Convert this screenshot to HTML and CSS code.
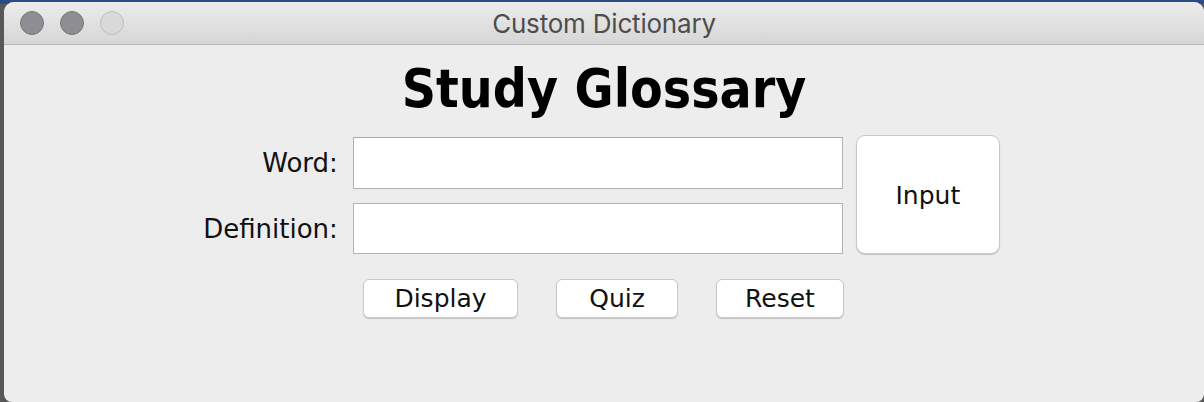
FILE: index.html
```html
<!DOCTYPE html>
<html>
<head>
<meta charset="utf-8">
<link rel="stylesheet" href="styles.css">
</head>
<body>
<div class="window">
  <div class="titlebar">
    <div class="lights">
      <span class="light"></span>
      <span class="light"></span>
      <span class="light off"></span>
    </div>
    <div class="title">Custom Dictionary</div>
    <div></div>
  </div>
  <div class="content">
    <h1 class="heading">Study Glossary</h1>
    <div class="form">
      <label class="label row1">Word:</label>
      <div class="field row1"></div>
      <label class="label row2">Definition:</label>
      <div class="field row2"></div>
      <button class="btn input-btn">Input</button>
    </div>
    <div class="actions">
      <button class="btn small w-display">Display</button>
      <button class="btn small w-quiz">Quiz</button>
      <button class="btn small w-reset">Reset</button>
    </div>
  </div>
</div>
</body>
</html>
```

FILE: styles.css
```css
html, body {
  margin: 0;
  padding: 0;
}
body {
  width: 1204px;
  height: 402px;
  overflow: hidden;
  background: linear-gradient(#2c4a86 0, #2c4a86 4px, #585858 4px, #585858 100%);
  font-family: "DejaVu Sans", sans-serif;
}
.window {
  margin: 2px 0 0 4px;
  width: 1200px;
  height: 400px;
  border-radius: 10px 10px 8px 8px;
  overflow: hidden;
  background: #ededed;
  display: flex;
  flex-direction: column;
}
.titlebar {
  height: 42px;
  flex: none;
  border-bottom: 1px solid #b9b9b9;
  background: linear-gradient(#ececec, #d6d6d6);
  display: grid;
  grid-template-columns: 1fr auto 1fr;
  align-items: center;
}
.lights {
  display: flex;
  gap: 16px;
  padding-left: 16px;
}
.light {
  width: 22px;
  height: 22px;
  border-radius: 50%;
  background: #8e8d91;
  border: 1px solid #79787c;
}
.light.off {
  background: #d9d9d9;
  border-color: #bdbdbd;
}
.title {
  font-family: Inter, "Liberation Sans", sans-serif;
  font-size: 26px;
  color: #4d4d4d;
  letter-spacing: -0.2px;
}
.content {
  flex: 1;
  display: flex;
  flex-direction: column;
  align-items: center;
  padding-top: 13px;
}
.heading {
  margin: 0;
  font-family: "DejaVu Sans Condensed", "DejaVu Sans", sans-serif;
  font-stretch: condensed;
  font-weight: bold;
  font-size: 53px;
  line-height: 62px;
  color: #000;
}
.form {
  margin-top: 15px;
  margin-right: 5px;
  display: grid;
  grid-template-columns: auto 490px 142px;
  grid-template-rows: 54px 51px;
  row-gap: 14px;
  column-gap: 15px;
}
.label {
  font-size: 26px;
  color: #111;
  justify-self: end;
  align-self: center;
}
.label.row1 {
  grid-row: 1;
  padding-top: 2px;
}
.label.row2 {
  grid-row: 2;
}
.field {
  grid-column: 2;
  background: #fff;
  border: 1px solid #b3b3b3;
  box-sizing: border-box;
}
.field.row1 {
  grid-row: 1;
  height: 52px;
  align-self: end;
  border-color: #a9a9a9 #b5b5b5 #b0b0b0 #b0b0b0;
}
.field.row2 {
  grid-row: 2;
  height: 51px;
}
.btn {
  font-family: "DejaVu Sans", sans-serif;
  font-size: 25px;
  color: #111;
  background: #fff;
  border: 1px solid #c9c9c9;
  box-shadow: 0 1px 1px rgba(0, 0, 0, 0.18);
  box-sizing: border-box;
  padding: 0;
  margin: 0;
}
.input-btn {
  grid-column: 3;
  grid-row: 1 / span 2;
  margin-left: -2px;
  border-radius: 9px;
  padding-top: 2px;
}
.actions {
  margin-top: 25px;
  margin-right: 1px;
  display: flex;
  gap: 38px;
}
.small {
  height: 39px;
  border-radius: 6px;
}
.w-display { width: 155px; }
.w-quiz { width: 122px; }
.w-reset { width: 128px; }
```
